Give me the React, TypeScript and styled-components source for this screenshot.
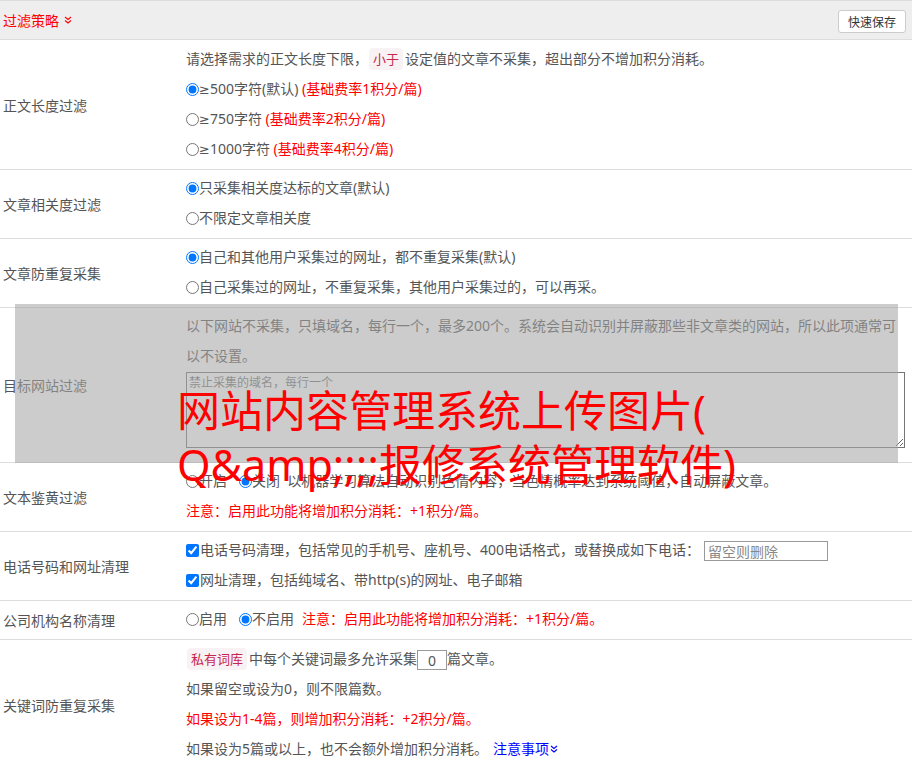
import React from "react";
import styled, { createGlobalStyle } from "styled-components";

const GlobalStyle = createGlobalStyle`
  html, body {
    margin: 0;
    padding: 0;
    background: #fff;
  }
  body {
    font-family: "Noto Sans", "Noto Sans CJK SC", sans-serif;
    font-size: 14px;
    color: #555;
  }
`;

const Page = styled.div`
  position: relative;
  width: 912px;
`;

const Header = styled.div`
  display: flex;
  align-items: center;
  justify-content: space-between;
  height: 38px;
  padding: 0 6px 0 3px;
  background: #eee;
  border-top: 1px solid #ddd;
  border-bottom: 1px solid #ddd;
`;

const HeaderTitle = styled.span`
  display: inline-flex;
  align-items: center;
  gap: 5px;
  color: #f00;
  font-size: 14px;
`;

const SaveButton = styled.button`
  height: 23px;
  padding: 0 9px;
  font-family: inherit;
  font-size: 12px;
  color: #333;
  background: #fff;
  border: 1px solid #ccc;
  border-radius: 3px;
  margin-top: 3px;
`;

const Row = styled.div`
  display: grid;
  grid-template-columns: 186px 1fr;
  border-bottom: 1px solid #ddd;
`;

const Label = styled.div`
  align-self: center;
  padding-left: 3px;
  color: #555;
`;

const Cell = styled.div`
  padding: 3px 7px 5px 0;
`;

const Line = styled.div<{ $tall?: boolean; $wrap?: boolean }>`
  line-height: ${(p) => (p.$tall ? "31px" : "30px")};
  height: ${(p) => (p.$wrap ? "auto" : p.$tall ? "31px" : "30px")};
  white-space: ${(p) => (p.$wrap ? "normal" : "nowrap")};
`;

const Red = styled.span<{ $gap?: boolean }>`
  color: #f00;
  margin-left: ${(p) => (p.$gap ? "8px" : "0")};
`;

const Ge = styled.span`
  font-family: "DejaVu Sans", sans-serif;
  font-size: 13px;
`;

const Code = styled.code`
  font-family: inherit;
  font-size: 13px;
  padding: 2px 4px;
  margin: 0 2px 0 1px;
  color: #c7254e;
  background: #f9f2f4;
  border-radius: 4px;
`;

const Radio = styled.input.attrs({ type: "radio" })<{ $gap?: boolean }>`
  width: 13px;
  height: 13px;
  margin: 0 0 0 ${(p) => (p.$gap ? "12px" : "0")};
  vertical-align: -2px;
`;

const Check = styled.input.attrs({ type: "checkbox" })`
  width: 13px;
  height: 13px;
  margin: 0 1px 0 0;
  vertical-align: -2px;
`;

const PhoneInput = styled.input`
  width: 124px;
  height: 20px;
  box-sizing: border-box;
  margin-left: 4px;
  padding: 0 3px;
  border: 1px solid #999;
  font-family: inherit;
  font-size: 14px;
  color: #555;
  vertical-align: middle;
  &::placeholder {
    color: #888;
  }
`;

const CountInput = styled.input`
  width: 30px;
  height: 20px;
  box-sizing: border-box;
  padding: 0;
  border: 1px solid #999;
  text-align: center;
  font-family: inherit;
  font-size: 14px;
  color: #555;
  vertical-align: middle;
`;

const DomainArea = styled.textarea`
  display: block;
  box-sizing: border-box;
  width: 719px;
  height: 76px;
  margin: 1px 0 9px;
  padding: 2px;
  border: 1px solid #767676;
  font-family: inherit;
  font-size: 12px;
  line-height: 16px;
  &::placeholder {
    color: #757575;
  }
`;

const Link = styled.a`
  display: inline-flex;
  align-items: center;
  gap: 1px;
  margin-left: 5px;
  color: #00f;
  text-decoration: none;
`;

const Shade = styled.div`
  position: absolute;
  left: 15px;
  top: 304px;
  width: 883px;
  height: 159px;
  background: rgba(165, 165, 165, 0.57);
`;

const BigTitle = styled.div`
  position: absolute;
  left: 177px;
  top: 384px;
  color: #f00;
  font-size: 43px;
  line-height: 54px;
  white-space: nowrap;
`;

const Chevrons = ({ color, size = 8 }: { color: string; size?: number }) => (
  <svg width={size} height={size} viewBox="0 0 8 8" fill="none">
    <path d="M1 1 L4 3.5 L7 1" stroke={color} strokeWidth="1.1" />
    <path d="M1 4.5 L4 7 L7 4.5" stroke={color} strokeWidth="1.1" />
  </svg>
);

export default function App() {
  return (
    <Page>
      <GlobalStyle />
      <Header>
        <HeaderTitle>
          过滤策略
          <Chevrons color="#f00" />
        </HeaderTitle>
        <SaveButton type="button">快速保存</SaveButton>
      </Header>

      <Row>
        <Label>正文长度过滤</Label>
        <Cell>
          <Line $tall>
            请选择需求的正文长度下限，<Code>小于</Code>设定值的文章不采集，超出部分不增加积分消耗。
          </Line>
          <Line>
            <Radio name="len" defaultChecked />
            <Ge>≥</Ge>500字符(默认) <Red>(基础费率1积分/篇)</Red>
          </Line>
          <Line>
            <Radio name="len" />
            <Ge>≥</Ge>750字符 <Red>(基础费率2积分/篇)</Red>
          </Line>
          <Line>
            <Radio name="len" />
            <Ge>≥</Ge>1000字符 <Red>(基础费率4积分/篇)</Red>
          </Line>
        </Cell>
      </Row>

      <Row>
        <Label>文章相关度过滤</Label>
        <Cell>
          <Line>
            <Radio name="rel" defaultChecked />只采集相关度达标的文章(默认)
          </Line>
          <Line>
            <Radio name="rel" />不限定文章相关度
          </Line>
        </Cell>
      </Row>

      <Row>
        <Label>文章防重复采集</Label>
        <Cell>
          <Line>
            <Radio name="dup" defaultChecked />自己和其他用户采集过的网址，都不重复采集(默认)
          </Line>
          <Line>
            <Radio name="dup" />自己采集过的网址，不重复采集，其他用户采集过的，可以再采。
          </Line>
        </Cell>
      </Row>

      <Row>
        <Label>目标网站过滤</Label>
        <Cell>
          <Line $wrap>
            以下网站不采集，只填域名，每行一个，最多200个。系统会自动识别并屏蔽那些非文章类的网站，所以此项通常可以不设置。
          </Line>
          <DomainArea placeholder="禁止采集的域名，每行一个" />
        </Cell>
      </Row>

      <Row>
        <Label>文本鉴黄过滤</Label>
        <Cell>
          <Line>
            <Radio name="porn" />开启
            <Radio name="porn" $gap defaultChecked />关闭&nbsp;
            以机器学习算法自动识别色情内容，当色情概率达到系统阈值，自动屏蔽文章。
          </Line>
          <Line>
            <Red>注意：启用此功能将增加积分消耗：+1积分/篇。</Red>
          </Line>
        </Cell>
      </Row>

      <Row>
        <Label>电话号码和网址清理</Label>
        <Cell>
          <Line>
            <Check defaultChecked />电话号码清理，包括常见的手机号、座机号、400电话格式，或替换成如下电话：
            <PhoneInput placeholder="留空则删除" />
          </Line>
          <Line>
            <Check defaultChecked />网址清理，包括纯域名、带http(s)的网址、电子邮箱
          </Line>
        </Cell>
      </Row>

      <Row>
        <Label>公司机构名称清理</Label>
        <Cell>
          <Line>
            <Radio name="org" />启用
            <Radio name="org" $gap defaultChecked />不启用
            <Red $gap>注意：启用此功能将增加积分消耗：+1积分/篇。</Red>
          </Line>
        </Cell>
      </Row>

      <Row>
        <Label>关键词防重复采集</Label>
        <Cell>
          <Line $tall>
            <Code>私有词库</Code>中每个关键词最多允许采集
            <CountInput defaultValue="0" />
            篇文章。
          </Line>
          <Line>如果留空或设为0，则不限篇数。</Line>
          <Line>
            <Red>如果设为1-4篇，则增加积分消耗：+2积分/篇。</Red>
          </Line>
          <Line>
            如果设为5篇或以上，也不会额外增加积分消耗。
            <Link href="#">
              注意事项
              <Chevrons color="#00f" />
            </Link>
          </Line>
        </Cell>
      </Row>

      <Shade />
      <BigTitle>
        网站内容管理系统上传图片(
        <br />
        {"Q&amp;;;;报修系统管理软件)"}
      </BigTitle>
    </Page>
  );
}
